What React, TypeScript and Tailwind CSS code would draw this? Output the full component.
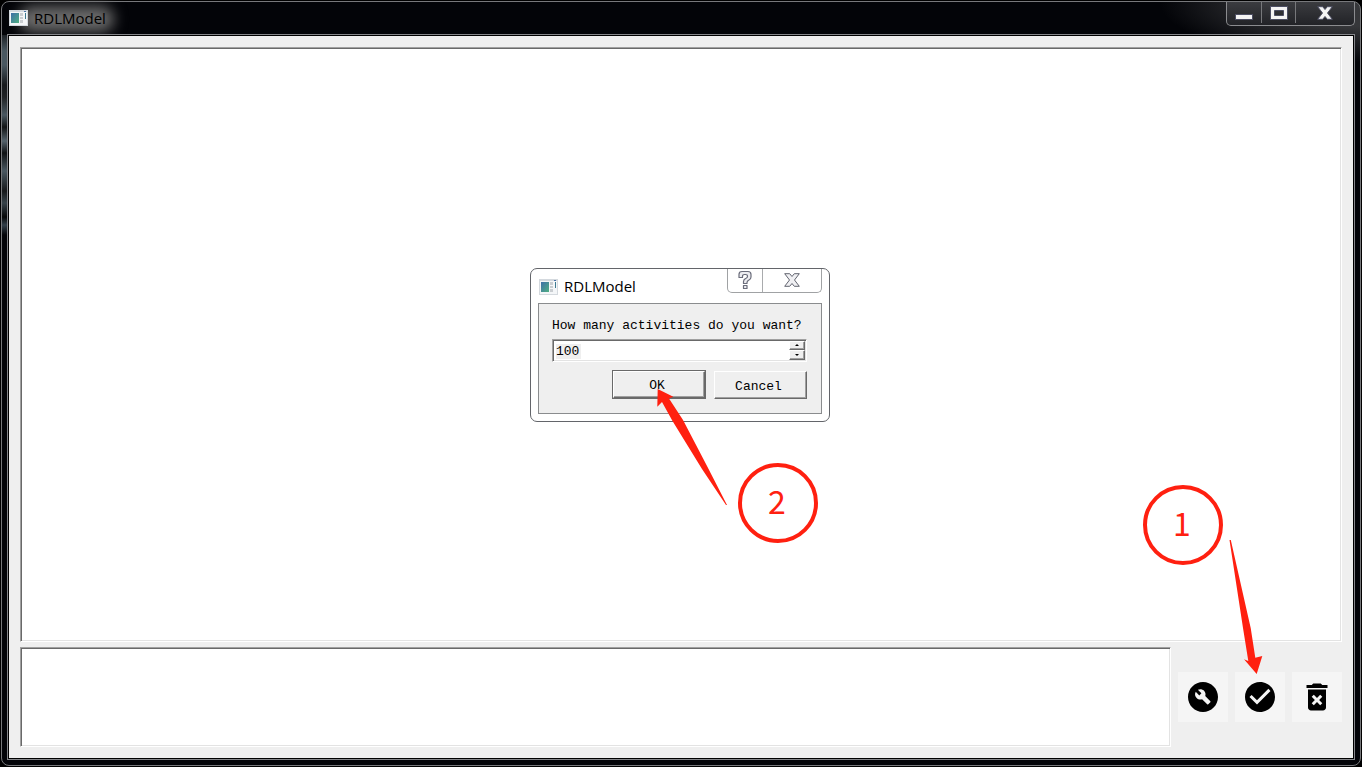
import { useState, type ReactNode } from "react";
import { MdBuildCircle, MdCheckCircle, MdDeleteForever } from "react-icons/md";

const sunken =
  "border border-t-[#a0a0a0] border-l-[#a0a0a0] border-r-white border-b-white shadow-[inset_1px_1px_#696969,inset_-1px_-1px_#e3e3e3]";

const raised =
  "border border-t-white border-l-white border-r-[#696969] border-b-[#696969] shadow-[inset_-1px_-1px_#a0a0a0]";

function AppIcon() {
  return (
    <svg className="h-4 w-[19px] shrink-0" viewBox="0 0 19 16">
      <defs>
        <linearGradient id="screen" x1="0" y1="0" x2="1" y2="1">
          <stop offset="0" stopColor="#3f6fa8" />
          <stop offset="1" stopColor="#4fb083" />
        </linearGradient>
      </defs>
      <rect width="19" height="16" fill="#d4d9de" />
      <rect x="1" y="2" width="17" height="13" fill="#f4f6f8" />
      <rect x="15" y="1" width="2" height="1" fill="#4a73a8" />
      <rect x="2" y="3" width="8" height="10" fill="url(#screen)" />
      <rect x="11" y="3" width="3" height="3" fill="#c9cdd1" />
      <rect x="11" y="7" width="3" height="2" fill="#c9cdd1" />
      <rect x="11" y="10" width="3" height="3" fill="#c9cdd1" />
      <rect x="16" y="3" width="1" height="6" fill="#3d7a90" />
    </svg>
  );
}

function CloseGlyph({ fill, stroke }: { fill: string; stroke: string }) {
  return (
    <svg className="h-[14px] w-4" viewBox="0 0 16 14">
      <path d="M0.700 0.700h5l2.300 2.800 2.300-2.800h5l-4.800 6.300 4.800 6.300h-5l-2.300-2.800-2.300 2.800h-5l4.800-6.300z" fill={fill} stroke={stroke} strokeLinejoin="round" />
    </svg>
  );
}

function WindowControls() {
  return (
    <div className="flex h-6 w-[129px] divide-x divide-[#77787b] rounded-b-[5px] border border-t-0 border-[#8b8c8f] bg-linear-to-b from-[#3b3c40] to-[#222327] pb-0.5">
      <button aria-label="Minimize" className="flex w-[35px] items-center justify-center">
        <svg className="h-4 w-[18px]" viewBox="0 0 18 16">
          <rect x="0.500" y="9.500" width="17" height="5" fill="#f4f4f4" stroke="#4c4e63" />
        </svg>
      </button>
      <button aria-label="Maximize" className="flex w-[34px] items-center justify-center">
        <svg className="h-4 w-[18px]" viewBox="0 0 18 16">
          <path d="M0.500 1.500h17v13h-17z M4.500 5.500h9v5h-9z" fill="#f4f4f4" fillRule="evenodd" stroke="#4c4e63" />
        </svg>
      </button>
      <button aria-label="Close" className="flex flex-1 items-center justify-center">
        <CloseGlyph fill="#f4f4f4" stroke="#4c4e63" />
      </button>
    </div>
  );
}

function Badge({ children }: { children: ReactNode }) {
  return (
    <div className="flex size-20 items-center justify-center rounded-full border-4 border-[#ff2010] pr-0.5 pb-1.5 font-['Noto_Sans_CJK_SC',sans-serif] text-[32px] leading-none text-[#ff2010]">
      {children}
    </div>
  );
}

function ActivityDialog() {
  const [count, setCount] = useState(100);

  return (
    <div role="dialog" aria-label="RDLModel" className="relative w-[300px] rounded-[7px] border border-[#63656a] bg-white px-[7px] pb-[7px]">
      <div className="flex h-[34px] justify-between">
        <div className="flex items-center gap-1.5 pt-0.5 pl-px">
          <AppIcon />
          <span className="font-['Open_Sans',sans-serif] text-[15px] text-black">RDLModel</span>
        </div>
        <div className="flex h-6 w-[95px] divide-x divide-[#a9abad] rounded-b-[5px] border border-t-0 border-[#a0a2a4]">
          <button aria-label="Help" className="flex w-[35px] items-center justify-center">
            <svg className="h-5 w-4" viewBox="0 0 16 20" fill="none" strokeLinejoin="round">
              <path d="M2 7.500V4.500Q2 1.500 5 1.500H11Q14 1.500 14 4.500V7Q14 9 12 10Q10 11 10 12.500V13.500H6.500V11.500Q6.500 9.500 9 8.300Q10.500 7.500 10.500 6.500Q10.500 4.500 8.500 4.500H7.500Q5.500 4.500 5.500 6.500V7.500Z" fill="#ececf0" stroke="#6a6c7a" strokeWidth="1.200" />
              <rect x="6.500" y="15.500" width="3.500" height="3" fill="#ececf0" stroke="#6a6c7a" strokeWidth="1.200" />
            </svg>
          </button>
          <button aria-label="Close dialog" className="flex flex-1 items-center justify-center">
            <CloseGlyph fill="#f0f0f3" stroke="#62646f" />
          </button>
        </div>
      </div>

      <div className="flex flex-col border border-[#8a8c8e] bg-[#efefef] pt-3 pr-[14px] pb-[14px] pl-[13px] font-['Liberation_Mono',monospace] text-[13px] text-black">
        <label htmlFor="count" className="h-[23px] leading-5 whitespace-nowrap">How many activities do you want?</label>
        <div className={`flex h-[23px] bg-white ${sunken}`}>
          <input
            id="count"
            type="number"
            value={count}
            onChange={e => setCount(Number(e.target.value))}
            className="m-px min-w-0 flex-1 appearance-none bg-[linear-gradient(#efefef,#efefef)] bg-[length:25px_15px] bg-[position:2px_3px] bg-no-repeat pt-1 pl-0.5 outline-none [appearance:textfield]"
          />
          <div className="flex w-[17px] flex-col py-px pr-px">
            <button aria-label="Increase" onClick={() => setCount(count + 1)} className={`flex flex-1 items-center justify-center bg-[#efefef] ${raised}`}>
              <svg className="h-0.5 w-1" viewBox="0 0 4 2"><path d="M0 2L2 0L4 2z" /></svg>
            </button>
            <button aria-label="Decrease" onClick={() => setCount(count - 1)} className={`flex flex-1 items-center justify-center bg-[#efefef] ${raised}`}>
              <svg className="h-0.5 w-1" viewBox="0 0 4 2"><path d="M0 0L2 2L4 0z" /></svg>
            </button>
          </div>
        </div>
        <div className="mt-2 flex justify-end gap-2">
          <div className="border border-[#696969]">
            <button className={`block h-[27px] w-[92px] bg-[#efefef] pt-1 pr-1 ${raised}`}>OK</button>
          </div>
          <button className={`mt-px h-7 w-[93px] bg-[#efefef] pt-1 pr-1 ${raised}`}>Cancel</button>
        </div>
      </div>

      {/* Step 2 */}
      <svg className="pointer-events-none absolute top-[120px] left-[126px] h-[118px] w-[72px]" viewBox="0 0 72 118">
        <path d="M0.700 0L16.300 7.700L12 9.500L26 31L50 77L70 116L69 116L45 80L15.500 32L5 13L0.300 17.700z" fill="#ff2010" />
      </svg>
      <div className="absolute top-[194px] left-[207px]">
        <Badge>2</Badge>
      </div>
    </div>
  );
}

export default function App() {
  return (
    <div className="h-screen bg-black p-px">
      <div className="flex h-full flex-col rounded-lg border border-[#77787b] bg-[#030408] bg-[radial-gradient(ellipse_200px_60px_at_right_top,#36373a,#36373a_40%,transparent)] px-[5px] pb-[5px]">
        <header className="flex h-8 shrink-0 items-start justify-between">
          <div className="relative flex h-8 items-center gap-1.5 px-0.5">
            <div className="absolute top-1 -right-1.5 bottom-0.5 left-3 rounded-full bg-[#6b6b6b] blur-[7px]" />
            <div className="relative flex items-center gap-1.5">
              <AppIcon />
              <h1 className="font-['Open_Sans',sans-serif] text-[15px] text-black">RDLModel</h1>
            </div>
          </div>
          <WindowControls />
        </header>

        <div className="relative flex min-h-0 flex-1 flex-col border border-[#85868a] bg-black p-px">
          {/* Desktop showing through the glass edge */}
          <div className="absolute top-0 -left-[6px] h-[200px] w-[5px] bg-[linear-gradient(#1c2025,#4a5861_8%,#4a5861_15%,#17191c_25%,#202224_31%,#4a5861_40%,#121415_46%,#55636c_53%,#101214_59%,#4a5861_68%,#17191b_78%,#38434a_84%,#050607_91%,#33404a_95%,#030408)]" />

          <main className="flex min-h-0 flex-1 flex-col gap-[5px] bg-[#efefef] p-[11px]">
            <section className={`grid min-h-0 flex-1 place-items-center bg-white pr-0.5 ${sunken}`}>
              <ActivityDialog />
            </section>

            <footer className="flex h-[100px] items-center gap-[7px]">
              <textarea aria-label="Log" readOnly className={`h-full min-w-0 flex-1 resize-none bg-white outline-none ${sunken}`} />
              <button aria-label="Configure" className="flex size-[50px] items-center justify-center bg-[#f5f5f5] text-black">
                <MdBuildCircle className="size-9" />
              </button>
              <div className="relative">
                <button aria-label="Confirm" className="flex size-[50px] items-center justify-center bg-[#f5f5f5] text-black">
                  <MdCheckCircle className="size-9" />
                </button>
                {/* Step 1 */}
                <svg className="pointer-events-none absolute right-[21px] bottom-12 h-[134px] w-9" viewBox="0 0 36 134">
                  <path d="M1.500 0L2.800 0L22.700 88L27.300 117.700L34.300 116L28.700 134L16 119.300L20.300 121L15 88z" fill="#ff2010" />
                </svg>
                <div className="absolute right-[62px] bottom-[157px]">
                  <Badge>1</Badge>
                </div>
              </div>
              <button aria-label="Delete" className="flex size-[50px] items-center justify-center bg-[#f5f5f5] text-black">
                <MdDeleteForever className="size-9" />
              </button>
            </footer>
          </main>
        </div>
      </div>
    </div>
  );
}
